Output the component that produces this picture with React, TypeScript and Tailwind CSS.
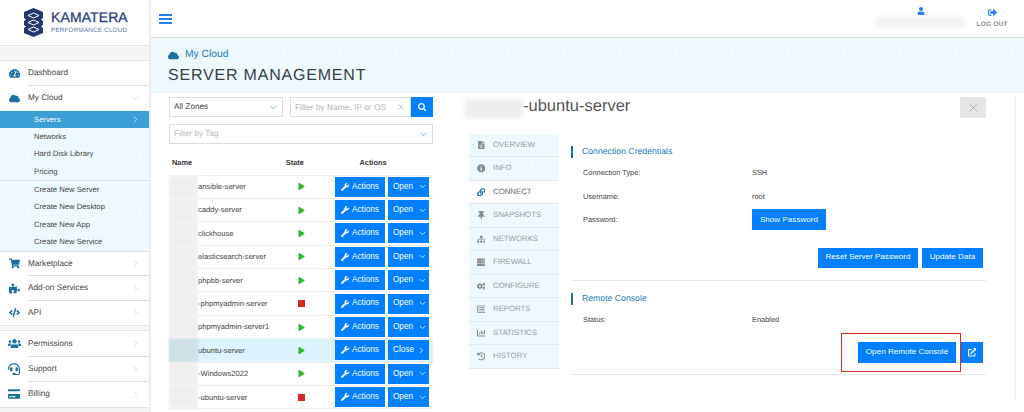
import {
  FaChartBar,
  FaCloud,
  FaCode,
  FaCogs,
  FaCreditCard,
  FaExternalLinkAlt,
  FaFileAlt,
  FaHeadset,
  FaHistory,
  FaInfoCircle,
  FaLink,
  FaPlay,
  FaPuzzlePiece,
  FaRegListAlt,
  FaSearch,
  FaServer,
  FaShoppingCart,
  FaSignOutAlt,
  FaSitemap,
  FaSquareFull,
  FaTachometerAlt,
  FaThumbtack,
  FaUser,
  FaUsers,
  FaWrench,
} from "react-icons/fa";
import { ChevronDown, ChevronRight, X } from "lucide-react";
import type { ReactNode } from "react";

const dots = "bg-[#eef9fe] bg-[radial-gradient(#e2eff6_0.6px,transparent_0.6px)] bg-[length:7px_7px]";

function NavItem({ icon, label, h, open, line }: { icon: ReactNode; label: string; h: string; open?: boolean; line?: boolean }) {
  return (
    <div className={`flex items-center ${h} relative text-[8.2px] text-[#444]`}>
      <span className="w-[28px] flex justify-center text-[#1c6f9f] text-[11px]">{icon}</span>
      <span>{label}</span>
      <span className="ml-auto mr-[8px] text-[#c4c4c4]">
        {open ? <ChevronDown size={11} strokeWidth={1.2} /> : <ChevronRight size={11} strokeWidth={1.2} />}
      </span>
      {line && <div className="absolute left-[28px] right-0 bottom-0 h-px bg-[#dedede]" />}
    </div>
  );
}

function SubItem({ label }: { label: string }) {
  return <div className="h-[17.4px] flex items-center pl-[34px] text-[7.7px] text-[#444]">{label}</div>;
}

function Sidebar() {
  return (
    <aside className="w-[151px] shrink-0 h-[412px] border-r-2 border-[#ececec] flex flex-col bg-white">
      <div className="h-[46px] shrink-0 flex items-center pl-[23px] gap-[7px] border-b border-[#e2e2e2]">
        <svg width="21" height="29" viewBox="0 0 21 29">
          <path d="M10.5 0 20 4V10L18 11.5 20 13V17L18 18.5 20 20V25L10.5 29 1 25V20L3 18.5 1 17V13L3 11.5 1 10V4Z" fill="#24376f" />
          <path d="M5 7.5 10.5 5 16 7.5 10.5 10Z M5 14.5 10.5 12 16 14.5 10.5 17Z M5 21.5 10.5 19 16 21.5 10.5 24Z" fill="none" stroke="#fff" strokeWidth="1" />
        </svg>
        <div className="flex flex-col leading-none">
          <span className="text-[14px] text-[#2c4080] tracking-[0.1px] [-webkit-text-stroke:0.3px_#2c4080]">KAMATERA</span>
          <span className="text-[6.3px] text-[#5a74a8] mt-[4px] tracking-[0.2px] whitespace-nowrap">PERFORMANCE CLOUD</span>
        </div>
      </div>
      <div className="h-[15px] shrink-0 bg-[#f5f5f5] border-b border-[#e2e2e2]" />
      <div className="flex items-center h-[25px] relative text-[8.2px] text-[#444]">
        <span className="w-[28px] flex justify-center text-[#1c6f9f] text-[11px]"><FaTachometerAlt /></span>
        <span>Dashboard</span>
        <div className="absolute left-[28px] right-0 bottom-0 h-px bg-[#dedede]" />
      </div>
      <NavItem icon={<FaCloud />} label="My Cloud" h="h-[25px]" open />
      <div className="h-[17px] bg-[#3b9ed4] flex items-center pl-[34px] text-[7.7px] text-white">
        Servers
        <ChevronRight size={11} strokeWidth={1.6} className="ml-auto mr-[8px]" />
      </div>
      <div className={dots}>
        <SubItem label="Networks" />
        <SubItem label="Hard Disk Library" />
        <SubItem label="Pricing" />
        <div className="border-t border-[#d9e3e8]" />
        <SubItem label="Create New Server" />
        <SubItem label="Create New Desktop" />
        <SubItem label="Create New App" />
        <SubItem label="Create New Service" />
      </div>
      <div className="border-t border-[#dedede]">
        <NavItem icon={<FaShoppingCart />} label="Marketplace" h="h-[24.5px]" line />
        <NavItem icon={<FaPuzzlePiece />} label="Add-on Services" h="h-[24.5px]" line />
        <NavItem icon={<FaCode />} label="API" h="h-[24.5px]" />
      </div>
      <div className="h-[6px] shrink-0 bg-[#f5f5f5] border-y border-[#e2e2e2]" />
      <NavItem icon={<FaUsers className="text-[13px]" />} label="Permissions" h="h-[25.5px]" line />
      <NavItem icon={<FaHeadset className="text-[12px]" />} label="Support" h="h-[25px]" line />
      <NavItem icon={<FaCreditCard className="text-[12px]" />} label="Billing" h="h-[25px]" />
      <div className="flex-1 bg-[#f5f5f5] border-t border-[#e2e2e2]" />
    </aside>
  );
}

const servers = [
  { name: "ansible-server", on: true },
  { name: "caddy-server", on: true },
  { name: "clickhouse", on: true },
  { name: "elasticsearch-server", on: true },
  { name: "phpbb-server", on: true },
  { name: "-phpmyadmin-server", on: false },
  { name: "phpmyadmin-server1", on: true },
  { name: "ubuntu-server", on: true, active: true },
  { name: "-Windows2022", on: true },
  { name: "-ubuntu-server", on: false },
];

function ServerRow({ name, on, active }: { name: string; on: boolean; active?: boolean }) {
  return (
    <div className={`h-[23.4px] flex items-center border-b border-[#ededed] text-[7.6px] text-[#444] ${active ? "bg-[#dcf2fd]" : ""}`}>
      <div className={`w-[29px] h-full shrink-0 blur-[1px] ${active ? "bg-[#cfe0e6]" : "bg-[#f1efed]"}`} />
      <div className="w-[84px] shrink-0 whitespace-nowrap">{name}</div>
      <div className="w-[38px] shrink-0 flex justify-center">
        {on ? <FaPlay className="text-[#2fb52f] text-[7px]" /> : <FaSquareFull className="text-[#d42a2a] text-[7px]" />}
      </div>
      <button className="w-[50px] h-[20px] ml-[15px] bg-[#007fff] text-white text-[8.2px] flex items-center justify-center gap-[3px]">
        <FaWrench className="text-[8px]" /> Actions
      </button>
      <button className={`w-[41px] h-[20px] ml-[3px] pl-[5px] bg-[#007fff] text-white text-[8.2px] flex items-center ${active ? "gap-[3px]" : "gap-[5px]"}`}>
        {active ? "Close" : "Open"}
        {active ? <ChevronRight size={9} strokeWidth={2} /> : <ChevronDown size={9} strokeWidth={2} />}
      </button>
    </div>
  );
}

function ServerList() {
  return (
    <div className="w-[264px] shrink-0 pt-[4px]">
      <div className="flex">
        <div className="w-[114px] h-[20px] border border-[#dcdcdc] flex items-center pl-[4px] text-[8.2px] text-[#444]">
          All Zones
          <ChevronDown size={11} strokeWidth={1.5} className="ml-auto mr-[3px] text-[#3b8fe0]" />
        </div>
        <div className="w-[121px] h-[20px] ml-[7px] border border-[#dcdcdc] flex items-center pl-[4px] text-[8.4px] text-[#b5b5b5]">
          Filter by Name, IP or OS
          <X size={8} strokeWidth={1.6} className="ml-auto mr-[5px] text-[#888]" />
        </div>
        <button className="w-[22px] h-[20px] bg-[#007fff] text-white flex items-center justify-center">
          <FaSearch className="text-[8.5px]" />
        </button>
      </div>
      <div className="h-[20px] mt-[7px] border border-[#dcdcdc] flex items-center pl-[4px] text-[8.2px] text-[#b5b5b5]">
        Filter by Tag
        <ChevronDown size={11} strokeWidth={1.5} className="ml-auto mr-[3px] text-[#3b8fe0]" />
      </div>
      <div className="h-[31.5px] flex items-end pb-[6px] border-b border-[#ededed] text-[7.4px] font-bold text-[#333]">
        <span className="w-[113px] pl-[3px]">Name</span>
        <span className="w-[38px] text-center">State</span>
        <span className="w-[126px] text-center">Actions</span>
      </div>
      {servers.map((s) => (
        <ServerRow key={s.name} {...s} />
      ))}
    </div>
  );
}

const tabs = [
  { label: "OVERVIEW", icon: <FaFileAlt /> },
  { label: "INFO", icon: <FaInfoCircle /> },
  { label: "CONNECT", icon: <FaLink />, active: true },
  { label: "SNAPSHOTS", icon: <FaThumbtack /> },
  { label: "NETWORKS", icon: <FaSitemap /> },
  { label: "FIREWALL", icon: <FaServer /> },
  { label: "CONFIGURE", icon: <FaCogs /> },
  { label: "REPORTS", icon: <FaRegListAlt /> },
  { label: "STATISTICS", icon: <FaChartBar /> },
  { label: "HISTORY", icon: <FaHistory /> },
];

function Heading({ children }: { children: string }) {
  return <div className="h-[12px] border-l-2 border-[#1c6f9f] pl-[9px] flex items-center text-[8.7px] text-[#1c7ab0]">{children}</div>;
}

function Field({ label, children }: { label: string; children?: ReactNode }) {
  return (
    <div className="h-[23.5px] flex items-center text-[7.4px] text-[#444]">
      <span className="w-[181px] pl-[12px]">{label}</span>
      {children}
    </div>
  );
}

function Blue({ w, h = "h-[20px]", children }: { w: string; h?: string; children: ReactNode }) {
  return <button className={`${w} ${h} bg-[#007fff] text-white text-[8.1px] flex items-center justify-center`}>{children}</button>;
}

function Detail() {
  return (
    <div className="w-[521px] shrink-0 ml-[32px] pt-[4px]">
      <div className="h-[21px] flex items-start">
        <div className="w-[58px] h-[19px] mt-[2px] bg-[#eeeeee] blur-[2px]" />
        <span className="text-[16.5px] leading-[19px] text-[#555]">-ubuntu-server</span>
        <button className="ml-auto w-[26px] h-[21px] bg-[#e6e6e6] flex items-center justify-center text-[#999]">
          <X size={15} strokeWidth={1} />
        </button>
      </div>
      <div className="flex mt-[15px]">
        <div className="ml-[4px] mt-[0.5px] w-[90px] shrink-0 self-start">
          {tabs.map((t) => (
            <div
              key={t.label}
              className={`h-[23.5px] flex items-center border-b border-[#e4e8ea] text-[7.8px] ${t.active ? "bg-white text-[#666]" : `${dots} text-[#999]`}`}
            >
              <span className={`w-[24px] flex justify-center text-[8.5px] ${t.active ? "text-[#1c6f9f]" : "text-[#888]"}`}>{t.icon}</span>
              {t.label}
            </div>
          ))}
        </div>
        <div className="ml-[12px] w-[415px]">
          <div className="pt-[13px] pb-[12px] border-b border-[#e8e8e8]">
            <Heading>Connection Credentials</Heading>
            <div className="mt-[3px]">
              <Field label="Connection Type:"><span>SSH</span></Field>
              <Field label="Username:"><span>root</span></Field>
              <Field label="Password:"><Blue w="w-[74px]" h="h-[21px]">Show Password</Blue></Field>
            </div>
            <div className="flex justify-end gap-[4px] mt-[16px] pr-[3px]">
              <Blue w="w-[100px]">Reset Server Password</Blue>
              <Blue w="w-[61px]">Update Data</Blue>
            </div>
          </div>
          <div className="pt-[12px] pb-[11px] border-b border-[#e8e8e8]">
            <Heading>Remote Console</Heading>
            <div className="mt-[3px]">
              <Field label="Status:"><span>Enabled</span></Field>
            </div>
            <div className="flex justify-end gap-[5px] mt-[11px] pr-[3px]">
              <div className="relative">
                <Blue w="w-[98px]" h="h-[21px]">Open Remote Console</Blue>
                <div className="absolute left-[-17px] top-[-9px] w-[120px] h-[39px] border border-[#e02a2a]" />
              </div>
              <Blue w="w-[22px]" h="h-[21px]"><FaExternalLinkAlt className="text-[8.5px]" /></Blue>
            </div>
          </div>
        </div>
      </div>
    </div>
  );
}

export default function App() {
  return (
    <div className="w-[1024px] h-[412px] overflow-hidden flex bg-white font-['Liberation_Sans',Arial,sans-serif] [text-rendering:geometricPrecision]">
      <Sidebar />
      <main className="flex-1 flex flex-col min-w-0">
        <header className="h-[38px] shrink-0 flex items-center border-b border-[#dcdcdc] pl-[8px]">
          <div className="w-[13px] flex flex-col gap-[2px]">
            <div className="h-[2px] bg-[#1f80ee]" />
            <div className="h-[2px] bg-[#1f80ee]" />
            <div className="h-[2px] bg-[#1f80ee]" />
          </div>
          <div className="ml-auto flex">
            <div className="w-[89px] flex flex-col items-center">
              <FaUser className="text-[#1f80ee] text-[8px]" />
              <div className="w-[89px] h-[10px] mt-[2px] bg-[#f1f1f1] blur-[2px]" />
            </div>
            <div className="w-[50px] ml-[2px] mr-[7px] flex flex-col items-center pt-[1px]">
              <FaSignOutAlt className="text-[#1f80ee] text-[9px]" />
              <span className="text-[6.5px] font-bold text-[#888] mt-[3px] tracking-[0.2px]">LOG OUT</span>
            </div>
          </div>
        </header>
        <section className={`h-[55px] shrink-0 pl-[17px] pt-[12px] ${dots} border-b border-[#e8f0f4]`}>
          <div className="flex items-center text-[10.3px] text-[#1c7ab0] gap-[6px] leading-none">
            <FaCloud className="text-[#1c6f9f] text-[11px]" />
            My Cloud
          </div>
          <h1 className="text-[16px] leading-none mt-[7px] text-[#3a3f45] tracking-[0.8px]">SERVER MANAGEMENT</h1>
        </section>
        <div className="flex-1 flex pl-[18px] min-h-0">
          <ServerList />
          <Detail />
          <div className="ml-[29px] mt-[4px] h-[304px] w-px bg-[#ececec]" />
        </div>
      </main>
    </div>
  );
}
